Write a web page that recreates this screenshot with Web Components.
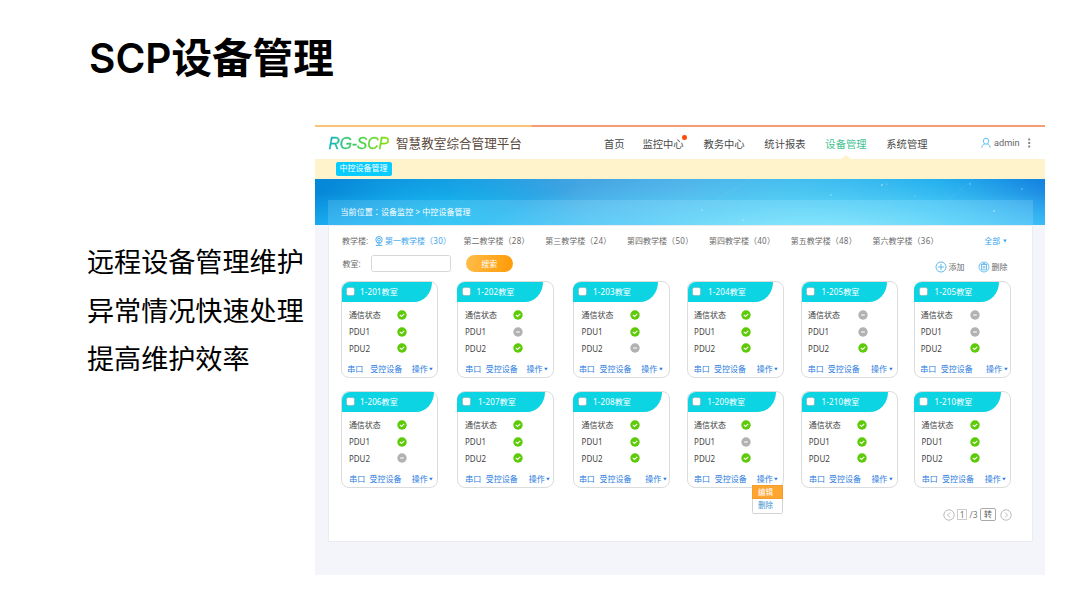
<!DOCTYPE html>
<html lang="zh-CN">
<head>
<meta charset="utf-8">
<title>SCP设备管理</title>
<style>
  html, body { margin: 0; width: 1080px; height: 608px; overflow: hidden; background: #fff; }
  body { font-family: "Noto Sans", "Noto Sans CJK SC", sans-serif; }
</style>
</head>
<body>
<scp-slide>
  <span slot="title">SCP设备管理</span>
  <span slot="point">远程设备管理维护</span>
  <span slot="point">异常情况快速处理</span>
  <span slot="point">提高维护效率</span>
  <scp-console>
    <scp-header></scp-header>
    <scp-banner>当前位置<span lang="zh-Hant">：</span>设备监控 &gt; 中控设备管理</scp-banner>
    <scp-panel>
      <scp-filter></scp-filter>
      <scp-toolbar></scp-toolbar>
      <scp-room-grid></scp-room-grid>
      <scp-pager></scp-pager>
    </scp-panel>
  </scp-console>
</scp-slide>

<script>
class ScpElement extends HTMLElement {
  constructor() {
    super();
    this.attachShadow({ mode: "open" });
  }

  connectedCallback() {
    this.shadowRoot.innerHTML = this.template();
  }

  template() {
    return "<slot></slot>";
  }
}

class Slide extends ScpElement {
  template() {
    return `
    <style>
    :host { display: flex; flex-direction: column; width: 1080px; height: 608px; color: #000; }
    h1 {
      margin: 0;
      padding: 35px 0 0 89px;
      height: 90px;
      box-sizing: border-box;
      font: 600 40.6px/48px Inter, "Noto Sans CJK SC", sans-serif;
      white-space: nowrap;
    }
    .body { display: flex; padding-top: 35px; }
    .points {
      display: flex;
      flex-direction: column;
      box-sizing: border-box;
      width: 315px;
      padding: 112px 0 0 87px;
      font: 27.1px/48.7px "Noto Sans CJK SC", sans-serif;
      white-space: nowrap;
    }
    </style>
    <h1><slot name="title"></slot></h1>
    <div class="body">
      <div class="points"><slot name="point"></slot></div>
      <slot></slot>
    </div>`;
  }
}

class Console extends ScpElement {
  template() {
    return `
    <style>
    :host { display: flex; flex-direction: column; width: 729.5px; height: 449.5px; background: #f3f5fa; }
    .stripe { height: 2px; background: linear-gradient(90deg, #f9c677 216px, #f79c75 217px); }
    </style>
    <div class="stripe"></div>
    <slot></slot>`;
  }
}

class Header extends ScpElement {
  template() {
    const items = ["首页", "监控中心", "教务中心", "统计报表", "设备管理", "系统管理"];
    const nav = items.map((name, i) => {
      const cls = i == 1 ? "alert" : i == 4 ? "active" : "";
      return `<a class="${cls}">${name}</a>`;
    }).join("");
    return `
    <style>
    :host { display: block; }
    .top { display: flex; align-items: center; height: 32px; background: #fff; white-space: nowrap; }
    .logo {
      width: 67.5px;
      padding: 1px 0 0 13.5px;
      font: italic 15.8px/20px "Liberation Sans", sans-serif;
      letter-spacing: -0.2px;
      background: linear-gradient(90deg, #12b3c4 14px, #35c96f 32px, #45d040 48px, #86dd12 72px);
      -webkit-background-clip: text;
      color: transparent;
      -webkit-text-stroke: 0.3px transparent;
    }
    .name { width: 208px; font: 12.6px/20px "Noto Sans CJK SC", sans-serif; color: #5b493c; }
    nav { display: flex; gap: 19.8px; padding-top: 2px; font: 10.3px/20px "Noto Sans CJK SC", sans-serif; color: #4a4a4a; }
    nav a { position: relative; }
    nav a:first-child { margin-right: -2px; }
    .active { color: #3fc191; }
    .active::after {
      content: "";
      position: absolute;
      left: 15.5px;
      bottom: -5px;
      border: 5px solid transparent;
      border-top: 0;
      border-bottom: 4px solid #fff3cc;
    }
    .alert::after {
      content: "";
      position: absolute;
      right: -3.5px;
      top: 1px;
      width: 4.6px;
      height: 4.6px;
      border-radius: 50%;
      background: #ff4a08;
    }
    .user { display: flex; align-items: center; margin-left: 53.5px; font: 9.2px/20px Roboto, sans-serif; color: #666; }
    .user svg { display: block; }
    .user span { margin-left: 3px; width: 34px; }
    .sub { display: flex; align-items: flex-start; height: 20px; padding: 3px 0 0 20.5px; box-sizing: border-box; background: #fff3cc; }
    .tab {
      width: 56px;
      height: 13.5px;
      border-radius: 2px;
      background: #08cbff;
      color: #fff;
      font: 8px/12.5px "Noto Sans CJK SC", sans-serif;
      text-align: center;
    }
    </style>
    <div class="top">
      <div class="logo">RG-SCP</div>
      <div class="name">智慧教室综合管理平台</div>
      <nav>${nav}</nav>
      <div class="user">
        <svg width="10" height="12" viewBox="0 0 10 12" fill="none" stroke="#5cc4f5" stroke-width="1">
          <ellipse cx="5" cy="4.2" rx="2.7" ry="3"/>
          <path d="M.8 10.8C1 8.4 2.2 7.5 3.8 6.9M6.2 6.9C7.8 7.5 9 8.4 9.2 10.8"/>
        </svg>
        <span>admin</span>
        <svg width="3" height="10" fill="#888"><path d="M.2 .5h2v2h-2zM.2 4h2v2h-2zM.2 7.5h2v2h-2z"/></svg>
      </div>
    </div>
    <div class="sub"><div class="tab">中控设备管理</div></div>`;
  }
}

class Banner extends ScpElement {
  template() {
    return `
    <style>
    :host {
      display: flex;
      align-items: flex-end;
      height: 46px;
      padding-right: 12px;
      background:
        radial-gradient(ellipse 340px 84px at 500px 66px, rgba(140, 240, 255, .95), rgba(100, 220, 250, .65) 50%, transparent),
        radial-gradient(ellipse 140px 60px at 130px 40px, rgba(22, 200, 245, .7), transparent),
        linear-gradient(180deg, transparent 30%, rgba(40, 190, 255, .6)),
        linear-gradient(90deg, #0587d8, #1391de 130px, #45a6e2 270px, #4caae6 370px, #38b2ea 480px, #16a6ec 620px, #1583e0);
    }
    .stars { flex: none; margin-right: -716px; }
    .crumb {
      flex: 1;
      height: 25px;
      padding-left: 12.5px;
      background: rgba(255, 255, 255, .14);
      color: #fff;
      font: 8px/24px "Noto Sans", "Noto Sans CJK SC", sans-serif;
      letter-spacing: 0.08px;
      white-space: pre;
    }
    </style>
    <svg class="stars" width="729" height="46" fill="#fff" opacity=".45">
      <circle cx="516" cy="16" r=".8"/><circle cx="567" cy="6" r=".9"/><circle cx="572" cy="5" r=".6"/>
      <circle cx="655" cy="5" r=".8"/><circle cx="707" cy="10" r=".8"/><circle cx="679" cy="32" r=".9"/>
      <circle cx="428" cy="41" r=".8"/><circle cx="387" cy="31" r=".7"/><circle cx="600" cy="17" r=".6"/>
      <path d="M400 22L435 0M630 24L658 0" stroke="#fff" stroke-width=".5" opacity=".25"/>
    </svg>
    <div class="crumb"><slot></slot></div>`;
  }
}

class Panel extends ScpElement {
  template() {
    return `
    <style>
    :host {
      display: flex;
      flex-direction: column;
      box-sizing: border-box;
      width: 705px;
      height: 316.5px;
      margin-left: 13px;
      border: 1px solid #ebecef;
      background: #fff;
    }
    </style>
    <slot></slot>`;
  }
}

class Filter extends ScpElement {
  template() {
    const buildings = [["一", 30], ["二", 28], ["三", 24], ["四", 50], ["四", 40], ["五", 48], ["六", 36]];
    const links = buildings.map(([n, count]) => `<a>第${n}教学楼<span lang="zh-Hant">（${count}）</span></a>`).join("");
    return `
    <style>
    :host {
      display: flex;
      align-items: center;
      height: 29px;
      padding-left: 13px;
      font: 8px/20px "Noto Sans", "Noto Sans CJK SC", sans-serif;
      color: #6b6b6b;
      white-space: nowrap;
    }
    .label { width: 33px; }
    .links { display: grid; grid-template-columns: 78.5px repeat(6, 81.8px); margin-left: 2px; }
    .links span { letter-spacing: 0.3px; }
    .links a:first-child, .all { color: #3aa5ee; }
    .all { display: flex; align-items: center; gap: 3px; margin-left: 30px; }
    </style>
    <span class="label">教学楼:</span>
    <svg width="8" height="10" viewBox="0 0 8 10" fill="none" stroke="#3aa5ee" stroke-width=".9">
      <circle cx="4" cy="3.7" r="3.2"/><circle cx="4" cy="3.7" r="1.4"/>
      <path d="M2.2 6.5L4 8.5L5.8 6.5M.8 9.4h6.4"/>
    </svg>
    <div class="links">${links}</div>
    <div class="all">全部<svg width="4" height="4" fill="#3aa5ee"><path d="M.2 .6h3.6L2 3.4z"/></svg></div>`;
  }
}

class Toolbar extends ScpElement {
  template() {
    return `
    <style>
    :host {
      display: flex;
      height: 26px;
      padding-left: 13.5px;
      font: 8px/17px "Noto Sans", "Noto Sans CJK SC", sans-serif;
      color: #6b6b6b;
      white-space: nowrap;
    }
    .label { width: 28px; }
    .field { box-sizing: border-box; width: 80px; height: 17px; border: 1px solid #d7d7d7; border-radius: 2.5px; }
    .search {
      width: 46.5px;
      height: 17px;
      margin-left: 15.5px;
      border-radius: 9px;
      background: linear-gradient(100deg, #ffbd4a, #ff9a05);
      color: #fff;
      text-align: center;
    }
    .tool { display: flex; align-items: center; gap: 2px; height: 17px; margin: 3px 0 0 13px; }
    .tool.add { margin-left: 422px; }
    svg { display: block; }
    </style>
    <span class="label">教室:</span>
    <div class="field"></div>
    <div class="search">搜索</div>
    <div class="tool add">
      <svg width="12" height="12" viewBox="0 0 12 12" fill="none" stroke="#4eb0ea" stroke-width=".9">
        <circle cx="6" cy="6" r="5"/><path d="M6 3v6M3 6h6"/>
      </svg>添加
    </div>
    <div class="tool">
      <svg width="12" height="12" viewBox="0 0 12 12" fill="none" stroke="#4eb0ea" stroke-width=".8">
        <circle cx="6" cy="6" r="5"/><path d="M2.8 3.5h6.4M3.5 3.5v5.4h5V3.5M5.2 5v2.6M6.8 5v2.6M4.5 2.5h3"/>
      </svg>删除
    </div>`;
  }
}

class StatusIcon extends ScpElement {
  template() {
    const ok = this.hasAttribute("ok");
    return `
    <style>
    :host { display: block; width: 10px; height: 10px; }
    svg { display: block; }
    </style>
    <svg width="10" height="10" viewBox="0 0 10 10" fill="none" stroke="#fff">
      <circle cx="5" cy="5" r="4.7" fill="${ok ? "#5ccb05" : "#b2b2b2"}" stroke="none"/>
      <path d="${ok ? "M2.8 4.9L4.5 6.5L7.3 3.9" : "M3.2 5h3.6"}" stroke-width="1.1"/>
    </svg>`;
  }
}

class RoomCard extends ScpElement {
  template() {
    // x offsets: header width, title, labels, icons, then the three footer links
    const [head, title, label, icon, a, b, c] = this.getAttribute("cols").split(" ").map(Number);
    const states = this.getAttribute("states");
    const rows = ["通信状态", "PDU1", "PDU2"].map((name, i) => `
      <span>${name}</span><scp-status ${states[i] == "1" ? "ok" : ""}></scp-status>`).join("");
    return `
    <style>
    :host {
      display: flex;
      flex-direction: column;
      box-sizing: border-box;
      position: relative;
      width: 97px;
      height: 97px;
      border: 1px solid #dcdcdc;
      border-radius: 8px;
      font: 8px/17px "Noto Sans", "Noto Sans CJK SC", sans-serif;
      color: #444;
      white-space: nowrap;
    }
    .head {
      display: flex;
      align-items: center;
      box-sizing: border-box;
      width: ${head}px;
      height: 20.5px;
      margin: -0.5px 0 0 -0.5px;
      padding-left: 4.6px;
      border-radius: 8px 0 18px 0 / 8px 0 20px 0;
      background: #0cd4e3;
      color: #fff;
      letter-spacing: 0.15px;
    }
    .box { display: block; margin-right: ${title - 13.6}px; }
    .rows { display: grid; grid-template-columns: ${icon - label - 4.5}px 10px; grid-auto-rows: 16.9px; align-items: center; margin: 4.6px 0 0 ${label - 1}px; }
    .rows scp-status { margin-top: 1px; }
    .rows scp-status:last-child { margin-top: -1px; }
    .foot { display: grid; grid-template-columns: ${b - a}px ${c - b}px auto; justify-content: start; margin: 2.8px 0 0 ${a - 0.7}px; color: #2d7de0; }
    .ops { display: flex; align-items: center; gap: 1.5px; }
    ::slotted(*) { position: absolute; left: 63.5px; top: 93px; z-index: 1; }
    </style>
    <div class="head">
      <svg class="box" width="9" height="9"><rect x=".5" y=".5" width="8" height="8" rx="1.8" fill="#fff" stroke="#86a9ad" stroke-width=".6"/></svg>${this.getAttribute("name")}教室
    </div>
    <div class="rows">${rows}</div>
    <div class="foot">
      <span>串口</span><span>受控设备</span>
      <span class="ops">操作<svg width="4" height="4" fill="#2d7de0"><path d="M.2 .8h3.6L2 3.5z"/></svg></span>
    </div>
    <slot></slot>`;
  }
}

class RoomMenu extends ScpElement {
  template() {
    return `
    <style>
    :host {
      display: block;
      box-sizing: border-box;
      width: 31px;
      height: 28.5px;
      border: 1px solid #d2d2d2;
      border-radius: 1.5px;
      background: #fff;
      font: 7.5px/13px "Noto Sans", "Noto Sans CJK SC", sans-serif;
      text-align: center;
      color: #3a93cf;
    }
    .item { padding-right: 3px; }
    .on { margin: -1px -1px 0; height: 14px; padding-right: 3px; line-height: 14px; background: #ffa531; box-shadow: inset 0 0 0 .7px #f29a2c; color: #fff; }
    </style>
    <div class="on">编辑</div>
    <div class="item">删除</div>`;
  }
}

class RoomGrid extends ScpElement {
  template() {
    const rooms = [
      ["1-201", "111", "90.5 18.3 7.7 60.3 5.7 28.7 70.3"],
      ["1-202", "101", "85.7 19.5 8.4 61.3 8.4 29 69.7"],
      ["1-203", "110", "85.3 20 9 61.7 6 26.7 68.3"],
      ["1-204", "111", "85 20.5 7 58.3 6.3 26.7 69.3"],
      ["1-205", "001", "85.3 20 7 61 6.3 26.3 69.7"],
      ["1-205", "001", "85 20.3 7 61 6.3 26.7 72"],
      ["1-206", "110", "92.3 18.3 7.7 60.3 7.7 28 70.3"],
      ["1-207", "111", "88.3 21 8.4 61.3 8.4 29 72"],
      ["1-208", "111", "88.7 20 9 61.7 6 26.7 72.3"],
      ["1-209", "101", "88.3 19.7 7 58.3 6.7 27.3 69.3"],
      ["1-210", "111", "86 20 7.7 60.3 7.7 27.7 70"],
      ["1-210", "111", "86.7 20.3 7.7 60.3 7.7 28 70.7"]
    ];
    const cards = rooms.map(([name, states, cols]) => `
      <scp-room name="${name}" states="${states}" cols="${cols}">${name == "1-209" ? "<scp-room-menu></scp-room-menu>" : ""}</scp-room>`).join("");
    return `
    <style>
    :host {
      display: grid;
      grid-template-columns: 115.4px 116px 114.5px 114px 112.7px 97px;
      grid-template-rows: 97px 97px;
      row-gap: 13px;
      padding-left: 12.2px;
    }
    </style>${cards}`;
  }
}

class Pager extends ScpElement {
  template() {
    return `
    <style>
    :host {
      display: flex;
      align-items: center;
      justify-content: flex-end;
      height: 13px;
      margin: 20px 20.5px 0 0;
      font: 8.5px/11px "Noto Sans", "Noto Sans CJK SC", sans-serif;
      color: #777;
    }
    svg { display: block; }
    .page { box-sizing: border-box; width: 10.5px; height: 11px; margin: 0 2px 0 2px; border: 1px solid #ccc; line-height: 9px; text-align: center; }
    .go { box-sizing: border-box; width: 16px; height: 12.5px; margin: 0 3.5px 0 2.5px; border: 1px solid #aaa; border-radius: 2px; font-size: 8px; line-height: 10px; text-align: center; color: #555; }
    </style>
    <svg width="12" height="12" viewBox="0 0 12 12" fill="none" stroke="#aaa" stroke-width=".8"><circle cx="6" cy="6" r="5.2"/><path d="M7 3.5L4.5 6L7 8.5"/></svg>
    <div class="page">1</div>/3
    <div class="go">转</div>
    <svg width="12" height="12" viewBox="0 0 12 12" fill="none" stroke="#aaa" stroke-width=".8"><circle cx="6" cy="6" r="5.2"/><path d="M5 3.5L7.5 6L5 8.5"/></svg>`;
  }
}

customElements.define("scp-slide", Slide);
customElements.define("scp-console", Console);
customElements.define("scp-header", Header);
customElements.define("scp-banner", Banner);
customElements.define("scp-panel", Panel);
customElements.define("scp-filter", Filter);
customElements.define("scp-toolbar", Toolbar);
customElements.define("scp-status", StatusIcon);
customElements.define("scp-room-menu", RoomMenu);
customElements.define("scp-room", RoomCard);
customElements.define("scp-room-grid", RoomGrid);
customElements.define("scp-pager", Pager);
</script>
</body>
</html>
